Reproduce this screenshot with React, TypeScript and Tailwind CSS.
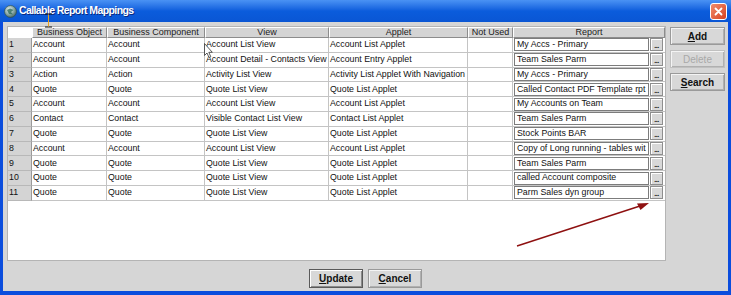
import React from 'react';

type Row = {
  bo: string;
  bc: string;
  view: string;
  applet: string;
  report: string;
};

const rows: Row[] = [
  { bo: 'Account', bc: 'Account', view: 'Account List View', applet: 'Account List Applet', report: 'My Accs - Primary' },
  { bo: 'Account', bc: 'Account', view: 'Account Detail - Contacts View', applet: 'Account Entry Applet', report: 'Team Sales Parm' },
  { bo: 'Action', bc: 'Action', view: 'Activity List View', applet: 'Activity List Applet With Navigation', report: 'My Accs - Primary' },
  { bo: 'Quote', bc: 'Quote', view: 'Quote List View', applet: 'Quote List Applet', report: 'Called Contact PDF Template rpt' },
  { bo: 'Account', bc: 'Account', view: 'Account List View', applet: 'Account List Applet', report: 'My Accounts on Team' },
  { bo: 'Contact', bc: 'Contact', view: 'Visible Contact List View', applet: 'Contact List Applet', report: 'Team Sales Parm' },
  { bo: 'Quote', bc: 'Quote', view: 'Quote List View', applet: 'Quote List Applet', report: 'Stock Points BAR' },
  { bo: 'Account', bc: 'Account', view: 'Account List View', applet: 'Account List Applet', report: 'Copy of Long running - tables wit' },
  { bo: 'Quote', bc: 'Quote', view: 'Quote List View', applet: 'Quote List Applet', report: 'Team Sales Parm' },
  { bo: 'Quote', bc: 'Quote', view: 'Quote List View', applet: 'Quote List Applet', report: 'called Account composite' },
  { bo: 'Quote', bc: 'Quote', view: 'Quote List View', applet: 'Quote List Applet', report: 'Parm Sales dyn group' },
];

const headers = [
  { label: 'Business Object', w: 'w-[75px]' },
  { label: 'Business Component', w: 'w-[98px]' },
  { label: 'View', w: 'w-[124px]' },
  { label: 'Applet', w: 'w-[139px]' },
  { label: 'Not Used', w: 'w-[45px]' },
  { label: 'Report', w: 'w-[152px]' },
];

function Cell({ w, children }: { w: string; children?: React.ReactNode }) {
  return (
    <div className={`${w} h-full shrink-0 border-r border-b border-[#c4c4c4] pl-[1px] flex items-center overflow-hidden whitespace-nowrap`}>
      {children}
    </div>
  );
}

function WinButton({ children, disabled, isDefault }: { children: React.ReactNode; disabled?: boolean; isDefault?: boolean }) {
  return (
    <button
      className={`flex items-center justify-center bg-[#d8d8d8] text-[10px] font-bold border ${
        isDefault ? 'border-[#5a5a5a] shadow-[inset_1px_1px_0_#fff,inset_-1px_-1px_0_#8a8a8a]' : 'border-[#9a9a9a] shadow-[inset_1px_1px_0_#f4f4f4,inset_-1px_-1px_0_#b0b0b0]'
      } ${disabled ? 'text-[#a8a8a8] border-[#c0c0c0]' : 'text-[#111]'}`}
    >
      {children}
    </button>
  );
}

export default function App() {
  return (
    <div className="relative w-[731px] h-[295px] flex flex-col bg-[#0b4ddd] font-['Liberation_Sans',Arial,sans-serif] overflow-hidden">
      {/* Title bar */}
      <div className="h-[22px] shrink-0 flex items-center bg-linear-to-b from-[#4a92f4] via-[#0b5cdc] to-[#0a56d4] pl-[4px] pr-[4px]">
        <svg width="13" height="13" viewBox="0 0 13 13" className="shrink-0">
          <defs>
            <radialGradient id="g" cx="40%" cy="35%" r="65%">
              <stop offset="0%" stopColor="#e8f2f0" />
              <stop offset="60%" stopColor="#8aa9a6" />
              <stop offset="100%" stopColor="#4a6a68" />
            </radialGradient>
          </defs>
          <circle cx="6.5" cy="6.5" r="6" fill="url(#g)" stroke="#2d4f4c" strokeWidth="0.6" />
          <path d="M3 5 L6 3.5 L9.5 5 L7 7 L9 9.5 L5 9 Z" fill="#2f6b5e" opacity="0.8" />
        </svg>
        <span className="ml-[2px] text-white font-bold text-[10.5px] tracking-[-0.6px] [text-shadow:1px_1px_0_#0a2a80]">
          Callable Report Mappings
        </span>
        <div className="ml-auto w-[17px] h-[17px] rounded-[3px] border border-white bg-linear-to-br from-[#f08a6a] to-[#d8401c] flex items-center justify-center">
          <svg width="9" height="9" viewBox="0 0 9 9">
            <path d="M1.5 1.5 L7.5 7.5 M7.5 1.5 L1.5 7.5" stroke="#fff" strokeWidth="1.8" strokeLinecap="round" />
          </svg>
        </div>
      </div>

      {/* Body */}
      <div className="flex-1 mx-[3px] mb-[4px] bg-[#d6d6d6] flex flex-col">
        <div className="flex pt-[4px] pl-[4px]">
          {/* Table panel */}
          <div className="w-[659px] h-[235px] border border-[#b4b4b4] bg-white text-[8.8px] text-[#111] flex flex-col">
            <div className="flex h-[11px] shrink-0">
              <div className="w-[24px] h-full shrink-0 bg-white" />
              {headers.map((h) => (
                <div
                  key={h.label}
                  className={`${h.w} h-full shrink-0 bg-[#d4d4d4] border-t border-l border-white border-r border-r-[#8c8c8c] border-b border-b-[#8c8c8c] flex items-center justify-center leading-none text-[9px] text-[#222] whitespace-nowrap`}
                >
                  {h.label}
                </div>
              ))}
            </div>
            {rows.map((r, i) => (
              <div key={i} className="flex h-[14.8px] shrink-0">
                <div className="w-[24px] h-full shrink-0 bg-[#d4d4d4] border-r border-r-[#9a9a9a] border-b border-b-[#b8b8b8] pl-[1px] flex items-center">
                  {i + 1}
                </div>
                <Cell w="w-[75px]">{r.bo}</Cell>
                <Cell w="w-[98px]">{r.bc}</Cell>
                <Cell w="w-[124px]">{r.view}</Cell>
                <Cell w="w-[139px]">{r.applet}</Cell>
                <Cell w="w-[45px]" />
                <div className="w-[152px] h-full shrink-0 flex items-center pl-[1px] border-b border-[#c4c4c4]">
                  <div className="w-[135px] h-[13px] shrink-0 border border-[#7c7c7c] bg-white pl-[2px] flex items-center overflow-hidden whitespace-nowrap">
                    {r.report}
                  </div>
                  <div className="ml-[1px] w-[13px] h-[13px] shrink-0 bg-[#d8d8d8] border border-[#8e8e8e] shadow-[inset_1px_1px_0_#fff] flex items-end justify-center pb-[2px]">
                    <span className="text-[7px] font-bold leading-[4px] tracking-[-0.5px]">...</span>
                  </div>
                </div>
              </div>
            ))}
          </div>

          {/* Side buttons */}
          <div className="ml-[4px] pt-[1px] flex flex-col gap-[5px] w-[53px]">
            <div className="h-[18px] flex">
              <WinButton>
                <span className="w-[53px]">
                  <span className="underline">A</span>dd
                </span>
              </WinButton>
            </div>
            <div className="h-[18px] flex">
              <WinButton disabled>
                <span className="w-[53px] font-normal">Delete</span>
              </WinButton>
            </div>
            <div className="h-[18px] flex">
              <WinButton>
                <span className="w-[53px]">
                  <span className="underline">S</span>earch
                </span>
              </WinButton>
            </div>
          </div>
        </div>

        {/* Bottom buttons */}
        <div className="flex justify-center gap-[5px] pt-[8px]">
          <div className="w-[54px] h-[19px] flex">
            <WinButton isDefault>
              <span className="w-[52px]">
                <span className="underline">U</span>pdate
              </span>
            </WinButton>
          </div>
          <div className="w-[54px] h-[19px] flex">
            <WinButton>
              <span className="w-[52px]">
                <span className="underline">C</span>ancel
              </span>
            </WinButton>
          </div>
        </div>
      </div>

      {/* Overlays: text cursor, mouse pointer, annotation arrow */}
      <svg className="absolute left-0 top-0 pointer-events-none" width="731" height="295">
        <path d="M45 14 H52 M45 27 H52" stroke="#111" strokeWidth="1" />
        <path d="M48.5 14.5 V26.5" stroke="#e8a020" strokeWidth="1" />
        <path
          d="M204.5 43.5 L204.5 55.5 L207 53 L209 57.5 L210.8 56.7 L208.8 52.3 L212.3 52.3 Z"
          fill="#fff"
          stroke="#333"
          strokeWidth="0.8"
        />
        <path d="M517 246 L640 206" stroke="#8e1010" strokeWidth="1.4" />
        <path d="M649 203 L637 203.5 L640.5 210 Z" fill="#8e1010" />
      </svg>
    </div>
  );
}
